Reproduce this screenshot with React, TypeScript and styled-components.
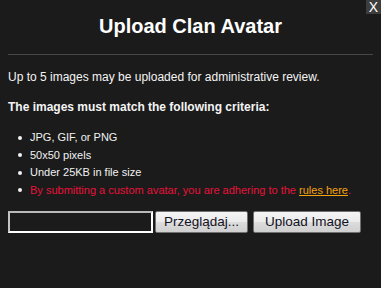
import React from "react";
import styled, { createGlobalStyle } from "styled-components";

const Global = createGlobalStyle`
  html, body { margin: 0; padding: 0; background: #1b1b1b; }
  body { font-family: "Liberation Sans", Arial, sans-serif; color: #f2f2f2; }
`;

const Dialog = styled.div`
  position: relative;
  width: 381px;
  height: 288px;
  box-sizing: border-box;
  padding: 14px 8px 0 8px;
  background: #1b1b1b;
  display: flex;
  flex-direction: column;
`;

const Close = styled.div`
  position: absolute;
  top: 0;
  right: 0;
  width: 15px;
  height: 14px;
  background: #3d3d3d;
  color: #ffffff;
  font-size: 14px;
  line-height: 14px;
  text-align: center;
`;

const Title = styled.h1`
  margin: 0;
  font-size: 20px;
  line-height: 24px;
  font-weight: bold;
  text-align: center;
  color: #ffffff;
`;

const Rule = styled.div`
  margin-top: 16px;
  height: 1px;
  background: #474747;
`;

const Para = styled.p<{ $bold?: boolean }>`
  margin: 14px 0 0 0;
  font-size: 12px;
  line-height: 16px;
  font-weight: ${(p) => (p.$bold ? "bold" : "normal")};
  color: #f4f4f4;
`;

const List = styled.ul`
  margin: 14px 0 0 0;
  padding: 0;
  list-style: none;
`;

const Item = styled.li<{ $warn?: boolean }>`
  display: flex;
  align-items: center;
  font-size: 11px;
  line-height: 17.5px;
  color: ${(p) => (p.$warn ? "#e8123a" : "#f2f2f2")};
  &::before {
    content: "";
    width: 4px;
    height: 4px;
    border-radius: 50%;
    background: #f2f2f2;
    margin: 0 8px 0 10px;
    flex: none;
  }
`;

const Link = styled.a`
  color: #f5a210;
  text-decoration: underline;
`;

const Controls = styled.div`
  margin-top: 12px;
  display: flex;
  align-items: center;
`;

const FileBox = styled.div`
  width: 145px;
  height: 22px;
  box-sizing: border-box;
  border-style: solid;
  border-width: 2px;
  border-color: #b9b9b9 #ffffff #ffffff #c4c4c4;
  background: #1b1b1b;
`;

const Button = styled.button<{ $w: number; $gap: number }>`
  width: ${(p) => p.$w}px;
  height: 22px;
  margin-left: ${(p) => p.$gap}px;
  box-sizing: border-box;
  border: 1px solid #707070;
  border-radius: 2px;
  background: linear-gradient(#f4f4f4 0%, #ebebeb 50%, #dddddd 51%, #cfcfcf 100%);
  color: #111122;
  font-family: "Liberation Sans", Arial, sans-serif;
  font-size: 13.5px;
  line-height: 18px;
  padding: 0;
  text-align: center;
`;

export default function App() {
  return (
    <>
      <Global />
      <Dialog>
        <Close>X</Close>
        <Title>Upload Clan Avatar</Title>
        <Rule />
        <Para>Up to 5 images may be uploaded for administrative review.</Para>
        <Para $bold>The images must match the following criteria:</Para>
        <List>
          <Item>JPG, GIF, or PNG</Item>
          <Item>50x50 pixels</Item>
          <Item>Under 25KB in file size</Item>
          <Item $warn>
            <span>
              By submitting a custom avatar, you are adhering to the{" "}
              <Link href="#">rules here</Link>.
            </span>
          </Item>
        </List>
        <Controls>
          <FileBox />
          <Button $w={93} $gap={2}>Przeglądaj...</Button>
          <Button $w={108} $gap={5}>Upload Image</Button>
        </Controls>
      </Dialog>
    </>
  );
}
